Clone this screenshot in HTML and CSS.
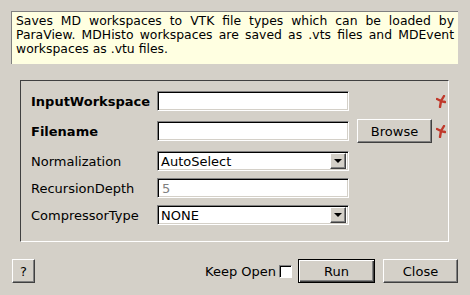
FILE: index.html
```html
<!DOCTYPE html>
<html lang="en">
<head>
    <meta charset="UTF-8">
    <title>SaveMDWorkspaceToVTK</title>
    <link rel="stylesheet" href="styles.css">
</head>
<body>
    <div class="dialog">
        <!-- Description -->
        <p class="desc">Saves MD workspaces to VTK file types which can be loaded by ParaView. MDHisto workspaces are saved as .vts files and MDEvent workspaces as .vtu files.</p>

        <!-- Properties -->
        <div class="group">
            <label class="lbl bold">InputWorkspace</label>
            <div class="field"><input type="text" class="text-in"></div>
            <div></div>
            <div class="star"><svg width="10" height="13" viewBox="0 0 10 13"><path d="M1 4 L5 6 L8 1 M5 6 L9 7 M5 6 L4 12" stroke="#c0392b" stroke-width="2.4" fill="none" stroke-linecap="round"/></svg></div>

            <label class="lbl bold">Filename</label>
            <div class="field"><input type="text" class="text-in"></div>
            <button class="btn browse">Browse</button>
            <div class="star"><svg width="10" height="13" viewBox="0 0 10 13"><path d="M1 4 L5 6 L8 1 M5 6 L9 7 M5 6 L4 12" stroke="#c0392b" stroke-width="2.4" fill="none" stroke-linecap="round"/></svg></div>

            <label class="lbl">Normalization</label>
            <div class="field combo"><span class="val">AutoSelect</span><span class="drop"><i></i></span></div>
            <div></div><div></div>

            <label class="lbl">RecursionDepth</label>
            <div class="field"><input type="text" class="text-in" placeholder="5"></div>
            <div></div><div></div>

            <label class="lbl">CompressorType</label>
            <div class="field combo"><span class="val">NONE</span><span class="drop"><i></i></span></div>
            <div></div><div></div>
        </div>

        <!-- Buttons -->
        <div class="footer">
            <button class="btn help">?</button>
            <span class="keep">Keep Open</span>
            <span class="check"></span>
            <button class="btn run">Run</button>
            <button class="btn close">Close</button>
        </div>
    </div>
</body>
</html>
```

FILE: styles.css
```css
/* Base */
body, html {
    margin: 0;
    padding: 0;
    background-color: #d4d0c8;
    font-family: "DejaVu Sans", sans-serif;
    font-size: 13px;
    color: #000;
}
* {
    box-sizing: border-box;
}

.dialog {
    width: 470px;
    height: 295px;
    padding: 11px 12px 0 11px;
}

/* Description box */
.desc {
    margin: 0;
    height: 53px;
    padding: 2px 4px 0 4px;
    background-color: #ffffe1;
    border-top: 1px solid #808080;
    border-left: 1px solid #808080;
    text-align: justify;
    font-size: 12.4px;
    line-height: 14px;
}

/* Property group */
.group {
    margin: 16px 9px 0 9px;
    height: 162px;
    padding: 6px 0 0 10px;
    border-top: 1px solid #404040;
    border-left: 1px solid #404040;
    border-right: 1px solid #fff;
    border-bottom: 1px solid #fff;
    display: grid;
    grid-template-columns: 126px 192px 83px 15px;
    grid-template-rows: 28px 32px 28px 26px 28px;
    align-items: center;
}

.lbl {
    white-space: nowrap;
}

.bold {
    font-weight: bold;
}

.field {
    height: 20px;
    background: #fff;
    border-top: 1px solid #808080;
    border-left: 1px solid #808080;
    border-right: 1px solid #fff;
    border-bottom: 1px solid #fff;
    box-shadow: inset 1px 1px 0 #000, inset -1px -1px 0 #d4d0c8;
}

.text-in {
    width: 100%;
    height: 100%;
    border: none;
    background: transparent;
    padding: 0 4px;
    font: inherit;
    outline: none;
}

.text-in::placeholder {
    color: #808080;
}

.combo {
    display: flex;
    align-items: center;
    padding: 2px;
}

.combo .val {
    flex: 1;
    padding-left: 1px;
}

.drop {
    width: 16px;
    height: 16px;
    background: #d4d0c8;
    border-top: 1px solid #fff;
    border-left: 1px solid #fff;
    border-right: 1px solid #404040;
    border-bottom: 1px solid #404040;
    box-shadow: inset -1px -1px 0 #808080;
    display: flex;
    align-items: center;
    justify-content: center;
}

.drop i {
    width: 0;
    height: 0;
    border-left: 4px solid transparent;
    border-right: 4px solid transparent;
    border-top: 4px solid #000;
}

.star {
    display: flex;
    justify-content: flex-end;
    padding-right: 1px;
}

/* Buttons */
.btn {
    height: 24px;
    background: #d4d0c8;
    font: inherit;
    color: #000;
    padding: 0;
    border-top: 1px solid #fff;
    border-left: 1px solid #fff;
    border-right: 1px solid #404040;
    border-bottom: 1px solid #404040;
    box-shadow: inset -1px -1px 0 #808080;
}

.browse {
    width: 75px;
    margin-left: 8px;
}

.footer {
    margin-top: 17px;
    display: flex;
    align-items: center;
}

.help {
    width: 23px;
    margin-left: 1px;
}

.keep {
    margin-left: auto;
    margin-right: 3px;
}

.check {
    width: 13px;
    height: 13px;
    background: #fff;
    border-top: 1px solid #808080;
    border-left: 1px solid #808080;
    border-right: 1px solid #fff;
    border-bottom: 1px solid #fff;
    box-shadow: inset 1px 1px 0 #000;
    margin-right: 6px;
}

.run {
    width: 77px;
    border: 1px solid #000;
    box-shadow: inset 1px 1px 0 #fff, inset -1px -1px 0 #404040, inset -2px -2px 0 #808080;
}

.close {
    width: 75px;
    margin-left: 8px;
}
```
